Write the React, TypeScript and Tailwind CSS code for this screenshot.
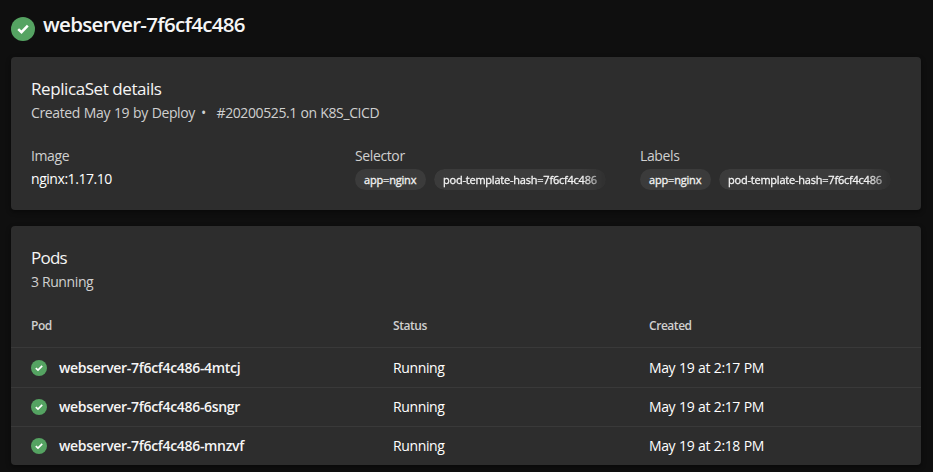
function StatusIcon({ className }: { className: string }) {
  return (
    <svg viewBox="0 0 16 16" className={className} aria-hidden="true">
      <circle cx="8" cy="8" r="8" fill="#55a362" />
      <path d="M4.8 8.1 L7 10.1 L11.2 5.8" fill="none" stroke="#ffffff" strokeWidth="1.7" />
    </svg>
  );
}

function Tags() {
  return (
    <div className="mt-[3px] flex gap-2 text-[11px] leading-[21px] text-white/90">
      <span className="h-[21px] w-[71px] rounded-full bg-[#3b3b3b] pl-[9px] whitespace-nowrap tracking-[-0.18px] [-webkit-text-stroke:0.3px]">
        app=nginx
      </span>
      <span className="h-[21px] w-[172px] rounded-full bg-[#3b3b3b] pl-[9px] whitespace-nowrap tracking-[-0.22px] [-webkit-text-stroke:0.3px] [mask-image:linear-gradient(to_right,black_148px,transparent_180px)]">
        pod-template-hash=7f6cf4c486
      </span>
    </div>
  );
}

const pods = [
  { name: "webserver-7f6cf4c486-4mtcj", created: "May 19 at 2:17 PM", row: "h-10 border-t pt-px" },
  { name: "webserver-7f6cf4c486-6sngr", created: "May 19 at 2:17 PM", row: "h-[39px] border-t" },
  { name: "webserver-7f6cf4c486-mnzvf", created: "May 19 at 2:18 PM", row: "h-[39px] border-t" },
];

const card = "rounded bg-[#2d2d2d] shadow-[0_2px_5px_rgba(0,0,0,0.45)]";

export default function App() {
  return (
    <main className="h-[472px] w-[933px] overflow-hidden bg-[#0f0f0f] pr-3 pl-[11px] font-['Open_Sans','Noto_Sans',sans-serif] text-[14px] tracking-[-0.38px] text-white">
      <header className="flex h-[57px] items-start pt-[10px]">
        <StatusIcon className="mt-[7px] size-6" />
        <h1 className="ml-2 text-[20.5px] leading-7 font-semibold tracking-[-0.69px] text-[#f5f5f5]">
          webserver-7f6cf4c486
        </h1>
      </header>

      <section className={`${card} h-[153px] px-5 pt-5`}>
        <h2 className="text-[17px] leading-6 tracking-[-0.42px] text-[#f5f5f5]">ReplicaSet details</h2>
        <p className="mt-[2px] flex leading-5 text-[#d0d0d0]">
          <span className="w-[170px] tracking-[-0.38px] [word-spacing:0.6px]">Created May 19 by Deploy</span>
          <span className="w-[15.5px]">•</span>
          <span className="tracking-[-0.4px] [word-spacing:0.4px]">#20200525.1 on K8S_CICD</span>
        </p>
        <div className="mt-[23px] flex">
          <div className="w-[324px]">
            <div className="leading-5 text-[#d0d0d0]">Image</div>
            <div className="mt-[3px] leading-5 tracking-[-0.45px]">nginx:1.17.10</div>
          </div>
          <div className="w-[285px]">
            <div className="leading-5 text-[#d0d0d0]">Selector</div>
            <Tags />
          </div>
          <div>
            <div className="leading-5 text-[#d0d0d0]">Labels</div>
            <Tags />
          </div>
        </div>
      </section>

      <section className={`${card} mt-4 h-[239px] pt-5`}>
        <h2 className="px-5 text-[17px] leading-6 tracking-[-0.75px] text-[#f5f5f5]">Pods</h2>
        <p className="mt-[2px] px-5 leading-5 text-[#d0d0d0]">3 Running</p>
        <div className="mt-6 flex h-[31px] px-5 text-[12px] leading-5 font-semibold tracking-[-0.45px] text-[#d0d0d0]">
          <span className="w-[362px]">Pod</span>
          <span className="w-[256px]">Status</span>
          <span>Created</span>
        </div>
        {pods.map((pod) => (
          <div key={pod.name} className={`${pod.row} flex items-center border-[#393939] px-5`}>
            <StatusIcon className="size-4" />
            <span className="ml-3 w-[334px] leading-5 font-semibold tracking-[-0.32px] text-[#f5f5f5]">{pod.name}</span>
            <span className="w-[256px] leading-5">Running</span>
            <span className="leading-5 tracking-[-0.38px] [word-spacing:0.5px]">{pod.created}</span>
          </div>
        ))}
      </section>
    </main>
  );
}
